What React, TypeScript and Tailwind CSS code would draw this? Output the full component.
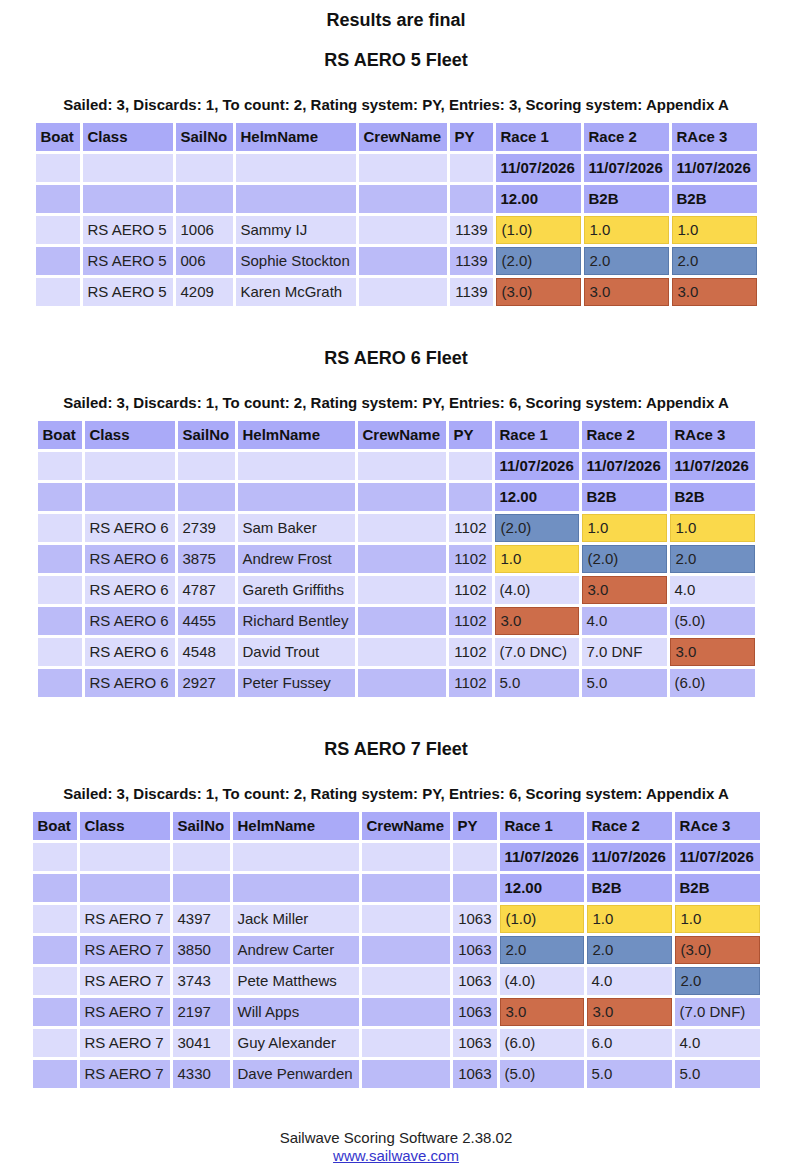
type Medal = "g" | "b" | "o" | "";

type Row = {
  cls: string;
  sail: string;
  helm: string;
  py: string;
  races: [string, Medal][];
};

type Fleet = {
  title: string;
  entries: number;
  tableW: string;
  cols: string[];
  rows: Row[];
};

const fleets: Fleet[] = [
  {
    title: "RS AERO 5 Fleet",
    entries: 3,
    tableW: "w-[727px]",
    cols: ["w-[44px]", "w-[90px]", "w-[57px]", "w-[120px]", "w-[88px]", "w-[43px]", "w-[85px]", "w-[85px]", "w-[85px]"],
    rows: [
      { cls: "RS AERO 5", sail: "1006", helm: "Sammy IJ", py: "1139", races: [["(1.0)", "g"], ["1.0", "g"], ["1.0", "g"]] },
      { cls: "RS AERO 5", sail: "006", helm: "Sophie Stockton", py: "1139", races: [["(2.0)", "b"], ["2.0", "b"], ["2.0", "b"]] },
      { cls: "RS AERO 5", sail: "4209", helm: "Karen McGrath", py: "1139", races: [["(3.0)", "o"], ["3.0", "o"], ["3.0", "o"]] },
    ],
  },
  {
    title: "RS AERO 6 Fleet",
    entries: 6,
    tableW: "w-[723px]",
    cols: ["w-[44px]", "w-[90px]", "w-[57px]", "w-[117px]", "w-[88px]", "w-[43px]", "w-[84px]", "w-[85px]", "w-[85px]"],
    rows: [
      { cls: "RS AERO 6", sail: "2739", helm: "Sam Baker", py: "1102", races: [["(2.0)", "b"], ["1.0", "g"], ["1.0", "g"]] },
      { cls: "RS AERO 6", sail: "3875", helm: "Andrew Frost", py: "1102", races: [["1.0", "g"], ["(2.0)", "b"], ["2.0", "b"]] },
      { cls: "RS AERO 6", sail: "4787", helm: "Gareth Griffiths", py: "1102", races: [["(4.0)", ""], ["3.0", "o"], ["4.0", ""]] },
      { cls: "RS AERO 6", sail: "4455", helm: "Richard Bentley", py: "1102", races: [["3.0", "o"], ["4.0", ""], ["(5.0)", ""]] },
      { cls: "RS AERO 6", sail: "4548", helm: "David Trout", py: "1102", races: [["(7.0 DNC)", ""], ["7.0 DNF", ""], ["3.0", "o"]] },
      { cls: "RS AERO 6", sail: "2927", helm: "Peter Fussey", py: "1102", races: [["5.0", ""], ["5.0", ""], ["(6.0)", ""]] },
    ],
  },
  {
    title: "RS AERO 7 Fleet",
    entries: 6,
    tableW: "w-[733px]",
    cols: ["w-[44px]", "w-[90px]", "w-[57px]", "w-[126px]", "w-[88px]", "w-[44px]", "w-[84px]", "w-[85px]", "w-[85px]"],
    rows: [
      { cls: "RS AERO 7", sail: "4397", helm: "Jack Miller", py: "1063", races: [["(1.0)", "g"], ["1.0", "g"], ["1.0", "g"]] },
      { cls: "RS AERO 7", sail: "3850", helm: "Andrew Carter", py: "1063", races: [["2.0", "b"], ["2.0", "b"], ["(3.0)", "o"]] },
      { cls: "RS AERO 7", sail: "3743", helm: "Pete Matthews", py: "1063", races: [["(4.0)", ""], ["4.0", ""], ["2.0", "b"]] },
      { cls: "RS AERO 7", sail: "2197", helm: "Will Apps", py: "1063", races: [["3.0", "o"], ["3.0", "o"], ["(7.0 DNF)", ""]] },
      { cls: "RS AERO 7", sail: "3041", helm: "Guy Alexander", py: "1063", races: [["(6.0)", ""], ["6.0", ""], ["4.0", ""]] },
      { cls: "RS AERO 7", sail: "4330", helm: "Dave Penwarden", py: "1063", races: [["(5.0)", ""], ["5.0", ""], ["5.0", ""]] },
    ],
  },
];

const HEAD = "bg-[#aaaaf8]";
const LIGHT = "bg-[#dcdcfc]";
const MID = "bg-[#bbbbf8]";

const medalCls: Record<Medal, string> = {
  g: "bg-[#fad94b] border border-[#e8c53c]",
  b: "bg-[#7090c2] border border-[#5a7aac]",
  o: "bg-[#cd6d4a] border border-[#ad5232]",
  "": "",
};

const cell = "h-[28px] px-[5px] py-0 align-middle whitespace-nowrap";
const headCell = `${cell} ${HEAD} font-bold text-left text-[#111]`;

function FleetTable({ fleet }: { fleet: Fleet }) {
  const heads = ["Boat", "Class", "SailNo", "HelmName", "CrewName", "PY", "Race 1", "Race 2", "RAce 3"];
  return (
    <section className="flex flex-col items-center">
      <h2 className="mt-[38px] text-[18px] leading-[22px] font-bold text-[#111]">{fleet.title}</h2>
      <p className="mt-[25px] text-[15px] leading-[18px] font-bold text-[#111]">
        Sailed: 3, Discards: 1, To count: 2, Rating system: PY, Entries: {fleet.entries}, Scoring system: Appendix A
      </p>
      <table className={`mt-[6px] table-fixed border-separate border-spacing-[3px] text-[15px] ${fleet.tableW}`}>
        <thead>
          <tr>
            {heads.map((h, i) => (
              <th key={h} className={`${headCell} ${fleet.cols[i]}`}>
                {h}
              </th>
            ))}
          </tr>
          <tr>
            {[0, 1, 2, 3, 4, 5].map((i) => (
              <td key={i} className={`${cell} ${LIGHT}`} />
            ))}
            {[0, 1, 2].map((i) => (
              <th key={`d${i}`} className={headCell}>
                11/07/2026
              </th>
            ))}
          </tr>
          <tr>
            {[0, 1, 2, 3, 4, 5].map((i) => (
              <td key={i} className={`${cell} ${MID}`} />
            ))}
            {["12.00", "B2B", "B2B"].map((t, i) => (
              <th key={`t${i}`} className={headCell}>
                {t}
              </th>
            ))}
          </tr>
        </thead>
        <tbody className="text-[#222]">
          {fleet.rows.map((r, ri) => {
            const bg = ri % 2 === 0 ? LIGHT : MID;
            return (
              <tr key={r.sail + r.helm}>
                <td className={`${cell} ${bg}`} />
                <td className={`${cell} ${bg}`}>{r.cls}</td>
                <td className={`${cell} ${bg}`}>{r.sail}</td>
                <td className={`${cell} ${bg}`}>{r.helm}</td>
                <td className={`${cell} ${bg}`} />
                <td className={`${cell} ${bg} text-right`}>{r.py}</td>
                {r.races.map(([v, m], i) => (
                  <td key={i} className={`${cell} ${m ? medalCls[m] : bg}`}>
                    {v}
                  </td>
                ))}
              </tr>
            );
          })}
        </tbody>
      </table>
    </section>
  );
}

export default function App() {
  return (
    <div className="min-h-[1176px] bg-white pr-[8px] pt-[9px] font-['Liberation_Sans',Arial,sans-serif] text-[#111]">
      <h1 className="text-center text-[18px] leading-[22px] font-bold">Results are final</h1>
      <div className="-mt-[20px]">
        {fleets.map((f) => (
          <FleetTable key={f.title} fleet={f} />
        ))}
      </div>
      <footer className="mt-[38px] text-center text-[15px] leading-[18px] text-[#222]">
        <div>Sailwave Scoring Software 2.38.02</div>
        <a href="#" className="text-[#3434cc] underline">
          www.sailwave.com
        </a>
      </footer>
    </div>
  );
}
